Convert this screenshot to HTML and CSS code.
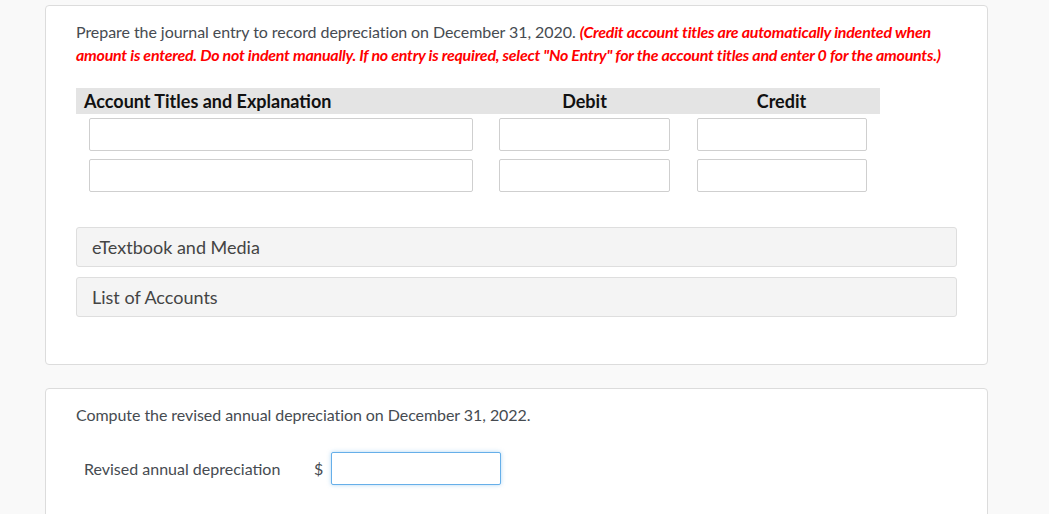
FILE: index.html
```html
<!DOCTYPE html>
<html>
<head>
<meta charset="utf-8">
<link rel="stylesheet" href="styles.css">
</head>
<body>
<div class="page">
  <section class="card card-first">
    <p class="question">Prepare the journal entry to record depreciation on December 31, 2020. <span class="note">(Credit account titles are automatically indented when amount is entered. Do not indent manually. If no entry is required, select "No Entry" for the account titles and enter 0 for the amounts.)</span></p>
    <div class="journal">
      <div class="jhead">
        <div class="col-acc">Account Titles and Explanation</div>
        <div class="col-num">Debit</div>
        <div class="col-num">Credit</div>
      </div>
      <div class="jrow">
        <div class="col-acc"><input class="field" type="text"></div>
        <div class="col-num"><input class="field" type="text"></div>
        <div class="col-num"><input class="field" type="text"></div>
      </div>
      <div class="jrow">
        <div class="col-acc"><input class="field" type="text"></div>
        <div class="col-num"><input class="field" type="text"></div>
        <div class="col-num"><input class="field" type="text"></div>
      </div>
    </div>
    <div class="panels">
      <div class="panel">eTextbook and Media</div>
      <div class="panel">List of Accounts</div>
    </div>
  </section>
  <section class="card card-second">
    <p class="question">Compute the revised annual depreciation on December 31, 2022.</p>
    <div class="answer">
      <span class="answer-label">Revised annual depreciation</span>
      <span class="dollar">$</span>
      <input class="field field-active" type="text">
    </div>
  </section>
</div>
</body>
</html>
```
FILE: styles.css
```css
html, body {
  margin: 0;
  padding: 0;
  background: #f9f9f9;
  font-family: Lato, "Open Sans", sans-serif;
  color: #464b51;
  overflow: hidden;
}
.page {
  width: 943px;
  margin-left: 45px;
  padding-top: 5px;
  display: flex;
  flex-direction: column;
  gap: 23px;
}
.card {
  background: #fff;
  border: 1px solid #dcdcdc;
  border-radius: 4px;
  padding: 14px 30px 47px 30px;
}
.question {
  margin: 0;
  font-size: 16px;
  line-height: 23px;
  letter-spacing: -0.06px;
}
.note {
  color: #f00;
  font-style: italic;
  font-weight: 700;
  letter-spacing: -0.25px;
}
.journal {
  margin-top: 22px;
  width: 804px;
}
.jhead {
  display: flex;
  background: #e4e4e4;
  height: 26px;
  align-items: center;
  font-weight: 700;
  font-size: 18px;
  color: #111;
}
.jhead .col-acc {
  padding-left: 8px;
}
.col-acc {
  width: 410px;
  box-sizing: border-box;
}
.col-num {
  width: 197px;
  text-align: center;
}
.jrow {
  display: flex;
  margin-top: 4px;
}
.jrow + .jrow {
  margin-top: 8px;
}
.jrow .col-acc, .jrow .col-num {
  padding: 0 13px;
  box-sizing: border-box;
}
.jrow .col-num:last-child {
  padding: 0 13px 0 14px;
}
.field {
  display: block;
  width: 100%;
  height: 33px;
  box-sizing: border-box;
  border: 1px solid #cfcfcf;
  border-radius: 2px;
  background: #fff;
  margin: 0;
  padding: 0 6px;
  font: inherit;
}
.panels {
  margin-top: 35px;
  display: flex;
  flex-direction: column;
  gap: 10px;
}
.panel {
  height: 40px;
  box-sizing: border-box;
  background: #f4f4f4;
  border: 1px solid #dedede;
  border-radius: 3px;
  padding-left: 15px;
  display: flex;
  align-items: center;
  font-size: 18px;
  color: #444;
}
.card-second {
  padding-bottom: 40px;
}
.answer {
  margin-top: 26px;
  display: flex;
  align-items: center;
  padding-left: 8px;
  font-size: 16px;
}
.answer-label {
  width: 230px;
}
.dollar {
  width: 17px;
}
.field-active {
  width: 170px;
  height: 33px;
  border: 1px solid #66afe9;
  box-shadow: 0 0 4px rgba(102, 175, 233, 0.5);
}
```
